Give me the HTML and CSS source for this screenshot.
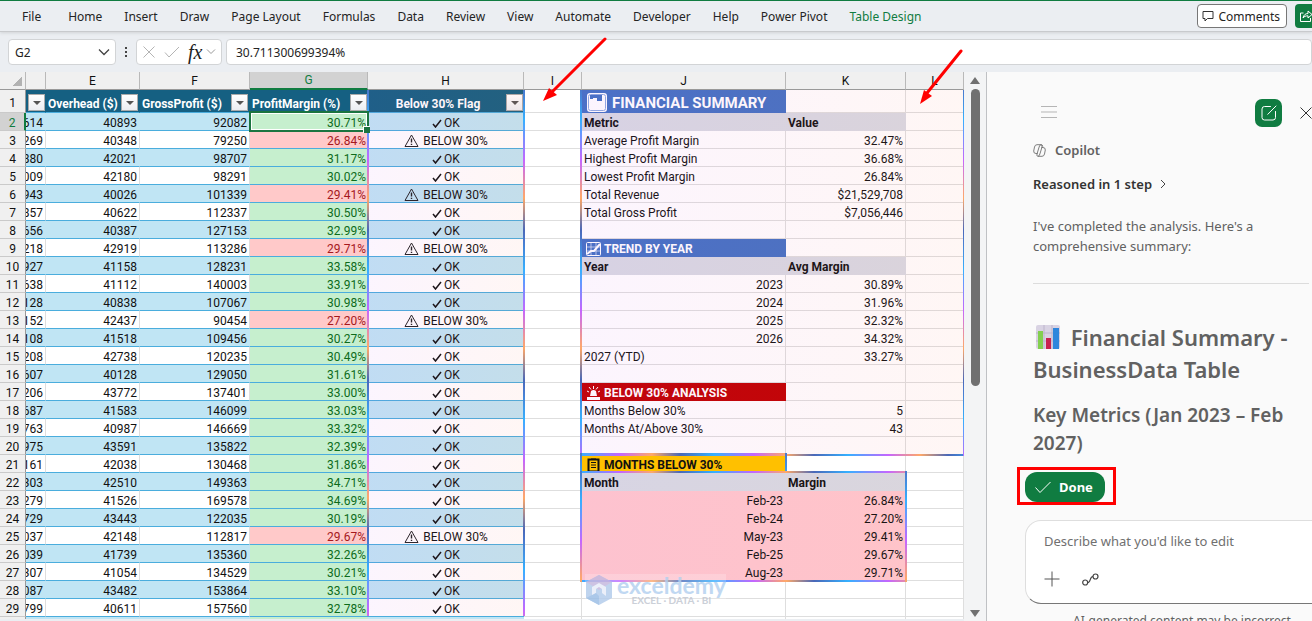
FILE: index.html
```html
<!DOCTYPE html>
<html lang="en">
<head>
<meta charset="utf-8">
<title>Workbook</title>
<link rel="stylesheet" href="styles.css">
</head>
<body>
<div class="app">
  <header class="ribbon">
    <nav class="tabs">
      <a href="#" class="file">File</a><a href="#">Home</a><a href="#">Insert</a><a href="#">Draw</a><a href="#">Page Layout</a><a href="#">Formulas</a><a href="#">Data</a><a href="#">Review</a><a href="#">View</a><a href="#">Automate</a><a href="#">Developer</a><a href="#">Help</a><a href="#">Power Pivot</a><a href="#" class="current">Table Design</a>
    </nav>
    <div class="ribbon-actions">
      <button class="comments" type="button">
        <svg width="12" height="12" viewBox="0 0 12 12" fill="none" stroke="#333"><path d="M1 1.500h10v7H5.500L3 11V8.500H1z"/></svg>
        Comments
      </button>
      <button class="share" type="button" aria-label="Share">
        <svg width="14" height="14" viewBox="0 0 14 14" fill="none" stroke="#fff"><path d="M4.500 4H1.500v8.500h10V9M4 9c.5-3 2.500-4.500 5-4.500V2L13 5.500 9 9V6.800C6.500 6.800 5.200 7.500 4 9z"/></svg>
      </button>
    </div>
  </header>

  <div class="formula-bar">
    <button class="name-box" type="button">G2
      <svg width="12" height="8" viewBox="0 0 12 8" fill="none" stroke="#444" stroke-width="1.300"><path d="M1 1.500l5 5 5-5"/></svg>
    </button>
    <span class="grip" aria-hidden="true"><i></i><i></i><i></i></span>
    <div class="fx-box">
      <svg width="14" height="14" viewBox="0 0 14 14" fill="none" stroke="#b4b4b4"><path d="M1.500 1.500l11 11M12.500 1.500l-11 11"/></svg>
      <svg width="16" height="14" viewBox="0 0 16 14" fill="none" stroke="#b4b4b4"><path d="M1 7.500l4 4.500L15 2"/></svg>
      <em>fx</em>
      <svg width="10" height="8" viewBox="0 0 10 8" fill="none" stroke="#999"><path d="M1 1.500l4 4 4-4"/></svg>
    </div>
    <input class="formula" type="text" aria-label="Formula" value="30.711300699394%">
  </div>

  <div class="workspace">
    <main class="sheet">
      <table class="grid">
        <colgroup><col class="c-head"><col class="c-d"><col class="c-e"><col class="c-f"><col class="c-g"><col class="c-h"><col class="c-i"><col class="c-j"><col class="c-k"><col class="c-l"></colgroup>
        <thead><tr><th class="corner"></th><th></th><th>E</th><th>F</th><th class="picked">G</th><th>H</th><th>I</th><th>J</th><th>K</th><th>L</th></tr></thead>
        <tbody id="rows"></tbody>
      </table>
      <div class="active-cell"></div>
      <div class="glow glow-flag"></div>
      <div class="glow glow-summary"></div>
      <div class="glow glow-title"></div>
      <div class="glow glow-months"></div>
      <div class="watermark">
        <svg width="28" height="32" viewBox="0 0 28 32"><path d="M14 1l13 7v16l-13 7-13-7V8z" fill="#b5cdec"/><path d="M14 1l13 7-13 8L1 8z" fill="#c5b9df"/><path d="M14 9l7 4v9l-4-3v-4l-3-2-3 2v4l-4 3v-9z" fill="#e8edf8"/><path d="M1 24l10-5 3 3v9z" fill="#9dbfe6"/></svg>
        <div class="mark-text"><b>exceldemy</b><span>EXCEL · DATA · BI</span></div>
      </div>
    </main>

    <div class="scrollbar"><span class="up"></span><span class="thumb"></span><span class="down"></span></div>

    <aside class="copilot">
      <div class="pane-top">
        <button class="menu" type="button" aria-label="Menu"><svg width="16" height="12" viewBox="0 0 16 12" stroke="#b5b5b5"><path d="M0 .5h16M0 6h16M0 11.500h16"/></svg></button>
        <button class="compose" type="button" aria-label="New chat"><svg width="16" height="16" viewBox="0 0 16 16" fill="none" stroke="#fff" stroke-linecap="round"><path d="M9.500 1.500H3.500Q1 1.500 1 4v8.500Q1 15 3.500 15H12q2.500 0 2.500-2.500V6.500M6.800 9.300L15 1"/></svg></button>
        <button class="close" type="button" aria-label="Close"><svg width="12" height="12" viewBox="0 0 12 12" stroke="#333"><path d="M.5.5l11 11M11.500.5l-11 11"/></svg></button>
      </div>
      <div class="chat">
        <div class="who"><svg width="13" height="13" viewBox="0 0 13 13" fill="none" stroke="#707070" stroke-width=".9"><path d="M4.500 9.500H3Q.5 9.500.7 7L1.500 3Q2 .7 4 .7h4q1.500 0 1.800 1.800M5 12.300Q3.300 12.300 4 10l1.800-6Q6.500.7 8 .7M8.500 3.500H10q2.500 0 2.300 2.500L11.500 10q-.5 2.300-2.500 2.300H5M8 .7Q9.700.7 9 3L7.200 9Q6.500 12.300 5 12.300"/></svg>Copilot</div>
        <button class="reasoned" type="button">Reasoned in 1 step <svg width="6" height="10" viewBox="0 0 6 10" fill="none" stroke="#444"><path d="M1 1l4 4-4 4"/></svg></button>
        <p>I've completed the analysis. Here's a comprehensive summary:</p>
        <hr>
        <h1><svg width="24" height="24" viewBox="0 0 24 24"><rect width="24" height="24" rx="2" fill="#d9d3e3"/><path d="M0 8h24M0 16h24M8 0v24M16 0v24" stroke="#bdb5cc"/><path fill="#83cf4f" d="M2 6h5v18H2z"/><path fill="#c9214f" d="M10 13h5v11h-5z"/><path fill="#2f86dc" d="M17 3h6v21h-6z"/></svg> Financial Summary - BusinessData Table</h1>
        <h2>Key Metrics (Jan 2023 – Feb 2027)</h2>
        <div class="done-frame"><button class="done" type="button"><svg width="16" height="12" viewBox="0 0 16 12" fill="none" stroke="#fff"><path d="M.5 6.500l4.500 5L15.500 1"/></svg>Done</button></div>
      </div>
      <div class="prompt">
        <input type="text" aria-label="Prompt" placeholder="Describe what you'd like to edit">
        <div class="prompt-tools">
          <button type="button" aria-label="Add"><svg width="16" height="16" viewBox="0 0 16 16" stroke="#555"><path d="M8 .5v15M.5 8h15"/></svg></button>
          <button type="button" aria-label="Tools"><svg width="17" height="13" viewBox="0 0 17 13" fill="none" stroke="#444" stroke-width="1.200"><circle cx="3.200" cy="9.500" r="2.500"/><circle cx="13.500" cy="3.500" r="2.500"/><path d="M5.700 9.500C9 9.500 7.500 3.500 11 3.500"/></svg></button>
        </div>
      </div>
      <small>AI-generated content may be incorrect</small>
    </aside>
  </div>
  <svg class="arrow arrow-one" width="66" height="66" viewBox="0 0 66 66"><path d="M63 2L10 55" stroke="red" stroke-width="3" stroke-linecap="round"/><path d="M1 64L7 51 15 58z" fill="red"/></svg>
  <svg class="arrow arrow-two" width="44" height="56" viewBox="0 0 44 56"><path d="M42 2L8 44" stroke="red" stroke-width="3" stroke-linecap="round"/><path d="M1 55L5 41 13 47z" fill="red"/></svg>
</div>
<script src="sheet.js"></script>
</body>
</html>
```
FILE: styles.css
```css
* { box-sizing: border-box; }
body { margin: 0; font-family: "Noto Sans", sans-serif; font-size: 12px; color: #242424; }
button { font: inherit; color: inherit; border: 0; background: none; padding: 0; }
svg { flex: none; }
.app { position: relative; display: flex; flex-direction: column; height: 100vh; overflow: hidden; background: #ebeef2; }

.ribbon { display: flex; align-items: center; height: 32px; border-top: 1px solid #107c41; border-bottom: 1px solid #c8cacd; box-shadow: 0 1px 3px #d0d3d6; }
.tabs { display: flex; gap: 22px; padding-left: 22px; flex: 1; white-space: nowrap; }
.tabs a { color: #242424; text-decoration: none; }
.tabs .file { margin-right: 5px; }
.tabs .current { color: #107c41; }
.ribbon-actions { display: flex; gap: 8px; }
.comments { display: flex; align-items: center; gap: 4px; height: 24px; padding: 0 6px 0 4px; border: 1px solid #777; border-radius: 4px; background: #fff; }
.share { display: flex; align-items: center; justify-content: flex-start; width: 17px; height: 24px; padding-left: 4px; overflow: hidden; border-radius: 4px 0 0 4px; background: #107c41; }

.formula-bar { display: flex; align-items: center; height: 40px; padding: 0 0 0 8px; }
.formula-bar > *:not(.grip) { height: 26px; border: 1px solid #d2d4d6; border-radius: 4px; background: #fff; }
.name-box { display: flex; align-items: center; justify-content: space-between; width: 108px; padding: 0 5px 0 6px; }
.grip { display: flex; flex-direction: column; align-items: center; gap: 2px; width: 20px; }
.grip i { width: 2px; height: 2px; background: #444; }
.fx-box { display: flex; align-items: center; gap: 8px; width: 86px; padding: 0 0 0 5px; }
.fx-box em { font: italic 20px "Liberation Serif", serif; color: #222; }
.fx-box em + svg { margin-left: -4px; }
.formula { flex: 1; min-width: 0; margin-left: 4px; padding: 0 9px; font: 12px "Noto Sans", sans-serif; color: #242424; border-right: 0; }

.workspace { display: flex; flex: 1; min-height: 0; }
.sheet { position: relative; flex: 1; min-width: 0; height: 547px; overflow: hidden; background: #fff; }
.grid { width: 964px; table-layout: fixed; border-collapse: separate; border-spacing: 0; font: 12px/14px Roboto, sans-serif; color: #111; }
.c-head { width: 26px; } .c-d { width: 20px; } .c-e { width: 94px; } .c-f { width: 110px; } .c-g { width: 118px; } .c-h { width: 156px; } .c-i { width: 58px; } .c-j { width: 204px; } .c-k { width: 120px; } .c-l { width: 58px; }
.grid th, .grid td { height: 18px; padding: 3px 2px 0; overflow: hidden; white-space: nowrap; border-right: 1px solid #dedede; border-bottom: 1px solid #dedede; }
.grid thead th { padding-top: 0; font-weight: 400; background: #f0f0f0; border-right-color: #b9b9b9; border-bottom-color: #999; }
.grid thead th.picked { color: #107c41; background: #d2d2d2; border-bottom: 2px solid #107c41; }
.grid .corner { background: linear-gradient(135deg, transparent 50%, #b2b2b2 50%) 12px 4px / 10px 10px no-repeat, #f0f0f0; }
.grid tbody th { font-weight: 400; text-align: center; background: #f0f0f0; border-right-color: #999; border-bottom-color: #cacaca; }
.grid tr.active th { color: #107c41; background: #d2d2d2; border-right: 2px solid #107c41; }
.grid tr.first th, .grid tr.first td { height: 22px; }
.n { text-align: right; }
.grid td.d, .grid td.e, .grid td.f, .grid td.g, .grid td.h { border-bottom-color: #4aaddd; }
.grid td.g, .grid td.h { border-right: 0; }
.grid .clip > div { display: flex; justify-content: flex-end; }
.grid .band td.d, .grid .band td.e, .grid .band td.f, .grid .band td.h { background: #c0e5f4; border-right-color: #c0e5f4; }
.grid td.good { background: #c6efce; color: #0d6b1b; }
.grid td.bad { background: #ffc9c9; color: #a5181d; }
.grid td.h { text-align: center; }
.warn { vertical-align: -2px; margin: -4px 4px 0 0; }
.tick { vertical-align: -1px; margin-right: 2px; }
.grid td.title { padding: 0 1px 0 2px; background: #156082; border-right-color: #156082; color: #fff; font-weight: 700; }
.head { display: flex; align-items: center; justify-content: space-between; height: 21px; }
.head .caption { padding-top: 5px; }
.head.center .caption { flex: 1; text-align: center; }
.filter { display: grid; place-items: center; flex: none; width: 17px; height: 17px; margin-top: 3px; border: 1px solid #ababab; background: linear-gradient(#fff, #eceef2); }
.filter::after { content: ""; border: 4px solid transparent; border-top-color: #555; border-bottom: 0; }
.grid td.sub { background: #d8dae3; border-color: #d8dae3; font-weight: 700; }
.grid td.banner { color: #fff; font-weight: 700; background: #4472c4; border-color: #4472c4; }
.grid td.red { background: #c00000; border-color: #c00000; }
.grid td.amber { color: #111; background: #ffc000; border-color: #ffc000; }
.grid td.rose { background: #ffc7ce; border-color: #ffc7ce; }
.label { display: flex; align-items: center; gap: 3px; padding-left: 2px; }
.grid .first .label { padding-left: 3px; font-size: 15px; line-height: 18px; gap: 5px; }

.active-cell { position: absolute; left: 249px; top: 39px; width: 120px; height: 21px; border: 2px solid #1b7440; box-shadow: inset 0 0 0 1px #fff; z-index: 2; }
.active-cell::after { content: ""; position: absolute; right: -3px; bottom: -3px; width: 6px; height: 6px; background: #1b7440; border: 1px solid #fff; border-width: 1px 0 0 1px; }
.glow { --v: repeating-linear-gradient(#4a78cc 0, #35b0ff 30px, #c466ff 70px, #ffa868 108px, #4a68b8 140px, #4a78cc 150px);
  --h: repeating-linear-gradient(90deg, #35b0ff 0, #c466ff 40px, #ffa868 72px, #4a68b8 100px, #35b0ff 134px);
  --wash: linear-gradient(90deg, rgba(200, 80, 240, .06), rgba(255, 110, 80, .06));
  position: absolute; pointer-events: none; }
.glow-flag { left: 367px; top: 18px; width: 158px; height: 526px; background: var(--v) left / 2px 100% no-repeat, var(--v) right / 2px 100% no-repeat, var(--wash); }
.glow-summary { left: 580px; top: 18px; width: 384px; height: 366px; background: var(--v) left / 2px 100% no-repeat, var(--v) right / 1px 100% no-repeat, var(--h) bottom / 100% 2px no-repeat, var(--wash); }
.glow-title { left: 580px; top: 381px; width: 207px; height: 20px; background: var(--v) left / 2px 100% no-repeat, var(--v) right / 2px 100% no-repeat, var(--h) top / 100% 3px no-repeat; }
.glow-months { left: 580px; top: 399px; width: 327px; height: 111px; background: var(--v) left / 2px 100% no-repeat, var(--v) right / 2px 100% no-repeat, var(--h) top / 100% 2px no-repeat, var(--h) bottom / 100% 2px no-repeat, linear-gradient(90deg, rgba(200, 80, 240, .04), rgba(255, 110, 80, .04)); }
.watermark { position: absolute; left: 585px; top: 502px; display: flex; gap: 4px; opacity: .85; background: rgba(255, 255, 255, .25); }
.mark-text { display: flex; flex-direction: column; align-items: center; color: #b6d2f0; }
.mark-text b { font: 700 23px/22px Lato, sans-serif; }
.mark-text span { font: 700 10px/9px Lato, sans-serif; color: #c3c8d2; }

.scrollbar { display: flex; flex-direction: column; align-items: center; gap: 5px; width: 23px; padding: 5px 0 4px; background: #f3f4f5; border-right: 1px solid #bfc1c4; }
.up, .down { border: 5px solid transparent; border-bottom: 7px solid #707070; border-top: 0; }
.down { margin-top: auto; border-bottom: 0; border-top: 7px solid #707070; }
.thumb { width: 9px; height: 297px; border-radius: 5px; background: #707070; }

.copilot { display: flex; flex-direction: column; width: 325px; overflow: hidden; background: #fafafa; color: #616161; }
.pane-top { display: flex; align-items: center; height: 82px; padding-left: 54px; flex: none; }
.compose { display: grid; place-items: center; width: 28px; height: 28px; margin-left: 198px; border-radius: 7px; background: #107c41; }
.close { margin-left: 18px; width: 12px; flex: none; display: flex; }
.chat { padding: 0 0 0 46px; font-size: 13px; line-height: 20px; }
.who { display: flex; gap: 9px; align-items: center; margin-top: -14px; font-weight: 600; }
.reasoned { display: flex; align-items: center; gap: 8px; margin-top: 14px; font-weight: 600; font-size: 13px; line-height: 20px; color: #333; }
.chat p { margin: 22px 24px 0 0; }
.chat hr { margin: 27px 3px 0 0; border: 0; border-top: 1px solid #dcdcdc; }
.chat h1 { margin: 37px 0 0; font-size: 22px; line-height: 32px; font-weight: 600; }
.chat h1 svg { margin: 0 5px 0 3px; vertical-align: -3px; }
.chat h2 { margin: 16px 0 0; font-size: 19px; line-height: 28px; font-weight: 600; }
.done-frame { width: 99px; height: 38px; margin: 10px 0 0 -16px; padding: 2px 5px 0; border: 3px solid red; }
.done { display: flex; align-items: center; gap: 8px; width: 80px; height: 30px; padding-left: 10px; border-radius: 12px; background: #107c41; color: #fff; font-weight: 700; }
.prompt { display: flex; flex-direction: column; justify-content: space-between; height: 84px; margin: 15px -20px 0 38px; padding: 10px 18px 16px; border: 1px solid #dedede; border-bottom-color: #777; border-radius: 16px; background: #fff; flex: none; }
.prompt input { border: 0; padding: 0; font: 13px/20px "Noto Sans", sans-serif; outline: 0; }
.prompt input::placeholder { color: #707070; opacity: 1; }
.prompt-tools { display: flex; align-items: center; gap: 22px; }
.prompt-tools button { display: flex; }
.copilot small { margin: 7px 0 0 86px; font-size: 12px; line-height: 20px; white-space: nowrap; }

.arrow { position: absolute; z-index: 3; }
.arrow-one { left: 542px; top: 37px; }
.arrow-two { left: 919px; top: 49px; }
```
FILE: sheet.js
```js
const left = [
  ["614", 40893, 92082, "30.71"], ["269", 40348, 79250, "26.84"], ["880", 42021, 98707, "31.17"], ["009", 42180, 98291, "30.02"],
  ["943", 40026, 101339, "29.41"], ["857", 40622, 112337, "30.50"], ["656", 40387, 127153, "32.99"], ["218", 42919, 113286, "29.71"],
  ["927", 41158, 128231, "33.58"], ["638", 41112, 140003, "33.91"], ["128", 40838, 107067, "30.98"], ["152", 42437, 90454, "27.20"],
  ["108", 41518, 109456, "30.27"], ["208", 42738, 120235, "30.49"], ["607", 40128, 129050, "31.61"], ["206", 43772, 137401, "33.00"],
  ["687", 41583, 146099, "33.03"], ["763", 40987, 146669, "33.32"], ["975", 43591, 135822, "32.39"], ["161", 42038, 130468, "31.86"],
  ["303", 42510, 149363, "34.71"], ["279", 41526, 169578, "34.69"], ["729", 43443, 122035, "30.19"], ["037", 42148, 112817, "29.67"],
  ["039", 41739, 135360, "32.26"], ["307", 41054, 134529, "30.21"], ["087", 43482, 153864, "33.10"], ["799", 40611, 157560, "32.78"],
  ["", "", "", ""]
];

const icons = {
  summary: '<svg width="20" height="19" viewBox="0 0 20 19"><rect width="20" height="19" rx="3" fill="#fff"/><path d="M3 2h12v6h-5V5H6v11H3z" fill="#4472c4"/><path d="M3 6h3v10H3z" fill="#fff"/><rect x="1.500" y="1.500" width="17" height="16" rx="2" fill="none" stroke="#8fabe0"/></svg>',
  trend: '<svg width="15" height="14" viewBox="0 0 15 14" fill="none" stroke="#fff"><rect x=".5" y=".5" width="14" height="13" rx="1"/><path d="M5 1v12M10 1v12M1 5h13M1 9h13" stroke-width=".6"/><path d="M1 12l4-3 3 0 6-7" stroke-width="2"/></svg>',
  alarm: '<svg width="15" height="14" viewBox="0 0 15 14" fill="#fff"><path d="M1 11h13v3H1zM4 10l1-5q2.500-2 5 0l1 5z"/><path d="M7.500 0v3M3 1l2 2.500M12 1l-2 2.500M1 5l2 1M14 5l-2 1" stroke="#fff"/></svg>',
  list: '<svg width="15" height="14" viewBox="0 0 15 14" fill="none" stroke="#111"><path d="M2.500 1.500h10v12h-10z" stroke-width="2"/><path d="M5 1h5M5 4.500h5M5 7h5M5 9.500h5"/></svg>'
};
const label = (icon, text) => `<div class="label">${icons[icon]}${text}</div>`;
const right = {
  1: [label("summary", "FINANCIAL SUMMARY"), "", "banner", ""],
  2: ["Metric", "Value", "sub", "sub"],
  3: ["Average Profit Margin", "32.47%", "", "n"], 4: ["Highest Profit Margin", "36.68%", "", "n"],
  5: ["Lowest Profit Margin", "26.84%", "", "n"], 6: ["Total Revenue", "$21,529,708", "", "n"],
  7: ["Total Gross Profit", "$7,056,446", "", "n"],
  9: [label("trend", "TREND BY YEAR"), "", "banner", ""],
  10: ["Year", "Avg Margin", "sub", "sub"],
  11: ["2023", "30.89%", "n", "n"], 12: ["2024", "31.96%", "n", "n"], 13: ["2025", "32.32%", "n", "n"], 14: ["2026", "34.32%", "n", "n"],
  15: ["2027 (YTD)", "33.27%", "", "n"],
  17: [label("alarm", "BELOW 30% ANALYSIS"), "", "banner red", ""],
  18: ["Months Below 30%", "5", "", "n"], 19: ["Months At/Above 30%", "43", "", "n"],
  21: [label("list", "MONTHS BELOW 30%"), "", "banner amber", ""],
  22: ["Month", "Margin", "sub", "sub"],
  23: ["Feb-23", "26.84%", "n rose", "n rose"], 24: ["Feb-24", "27.20%", "n rose", "n rose"], 25: ["May-23", "29.41%", "n rose", "n rose"],
  26: ["Feb-25", "29.67%", "n rose", "n rose"], 27: ["Aug-23", "29.71%", "n rose", "n rose"]
};
const ok = '<svg class="tick" width="10" height="9" viewBox="0 0 10 9" fill="none" stroke="#111" stroke-width="1.500"><path d="M1 5l2.500 3L9 1"/></svg>OK';
const low = '<svg class="warn" width="15" height="13" viewBox="0 0 15 13" fill="none" stroke="#222"><path d="M7.500 1l6.500 11.500H1z"/><path d="M7.500 4.500v4M7.500 9.800v1.200" stroke-width="1.400"/></svg>BELOW 30%';
const title = (col, text, extra = "") => `<td class="title ${col}"><div class="head ${extra}"><span class="caption">${text}</span><span class="filter"></span></div></td>`;
const side = i => {
  const [j, k, jc, kc] = right[i] || ["", "", "", ""];
  return `<td></td><td class="${jc}">${j}</td><td class="${kc}">${k}</td><td></td>`;
};

let html = `<tr class="first"><th>1</th>${title("d", "")}${title("e", "Overhead ($)")}${title("f", "GrossProfit ($)")}${title("g", "ProfitMargin (%)")}${title("h", "Below 30% Flag", "center")}${side(1)}</tr>`;
left.forEach(([d, e, f, g], index) => {
  const row = index + 2;
  const bad = g && parseFloat(g) < 30;
  html += `<tr class="${row % 2 ? "" : "band"} ${row === 2 ? "active" : ""}"><th>${row}</th>` +
    `<td class="d clip"><div>${d}</div></td><td class="e n">${e}</td><td class="f n">${f}</td>` +
    `<td class="g n ${bad ? "bad" : "good"}">${g && g + "%"}</td><td class="h">${g && (bad ? low : ok)}</td>${side(row)}</tr>`;
});
document.getElementById("rows").innerHTML = html;
```
